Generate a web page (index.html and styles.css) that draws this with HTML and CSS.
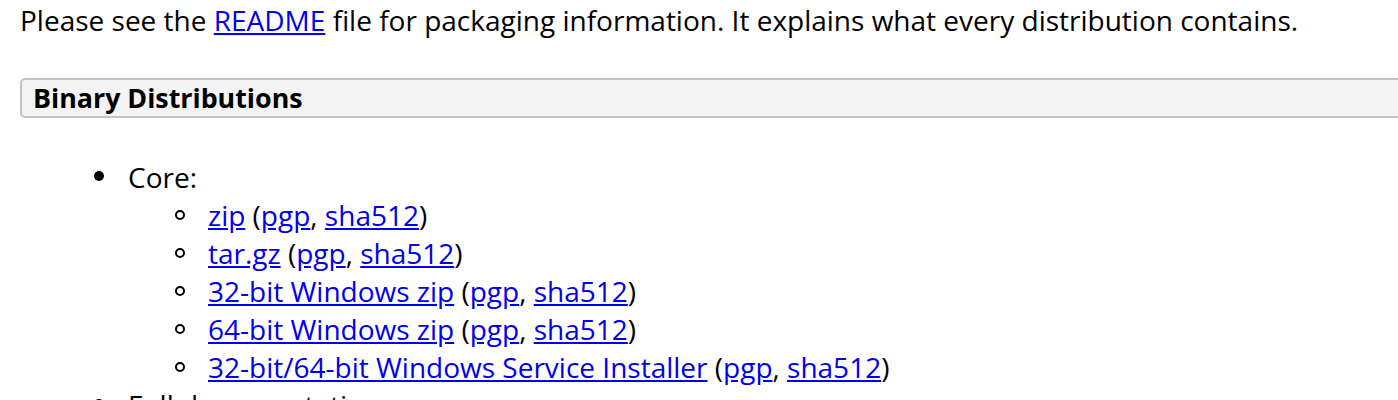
FILE: index.html
```html
<!DOCTYPE html>
<html>
<head>
<meta charset="utf-8">
<link rel="stylesheet" href="styles.css">
</head>
<body>
<p class="intro">Please see the <a href="#">README</a> file for packaging information. It explains what every distribution contains.</p>
<h3 class="section">Binary Distributions</h3>
<ul class="dist">
  <li>Core:
    <ul class="sub">
      <li><a href="#">zip</a> (<a href="#">pgp</a>, <a href="#">sha512</a>)</li>
      <li><a href="#">tar.gz</a> (<a href="#">pgp</a>, <a href="#">sha512</a>)</li>
      <li><a href="#">32-bit Windows zip</a> (<a href="#">pgp</a>, <a href="#">sha512</a>)</li>
      <li><a href="#">64-bit Windows zip</a> (<a href="#">pgp</a>, <a href="#">sha512</a>)</li>
      <li><a href="#">32-bit/64-bit Windows Service Installer</a> (<a href="#">pgp</a>, <a href="#">sha512</a>)</li>
    </ul>
  </li>
  <li>Full documentation:</li>
</ul>
</body>
</html>
```
FILE: styles.css
```css
html, body {
  margin: 0;
  padding: 0;
  overflow: hidden;
}
body {
  padding: 1px 0 0 20px;
  font-family: "Open Sans", "Liberation Sans", sans-serif;
  font-size: 28px;
  line-height: 38px;
  color: #000;
  background: #fff;
}
a {
  color: #0000ee;
  text-decoration: underline;
}
.intro {
  margin: 0;
}
.section {
  margin: 39px -30px 0 0;
  padding: 0 11px;
  height: 36px;
  line-height: 36px;
  font-size: 26.8px;
  font-weight: bold;
  background: #f3f3f3;
  border: 2px solid #c2c2c2;
  border-radius: 5px;
}
.dist {
  margin: 40px 0 0 0;
  padding-left: 108px;
  list-style: none;
}
.dist > li {
  position: relative;
}
.dist > li::before {
  content: "";
  position: absolute;
  left: -34.5px;
  top: 13px;
  width: 10px;
  height: 10px;
  border-radius: 50%;
  background: #000;
}
.sub {
  margin: 0;
  padding-left: 80px;
  list-style: none;
}
.sub > li {
  position: relative;
}
.sub > li::before {
  content: "";
  position: absolute;
  left: -33px;
  top: 14px;
  width: 6px;
  height: 6px;
  border-radius: 50%;
  border: 2px solid #000;
  background: #fff;
}
```
